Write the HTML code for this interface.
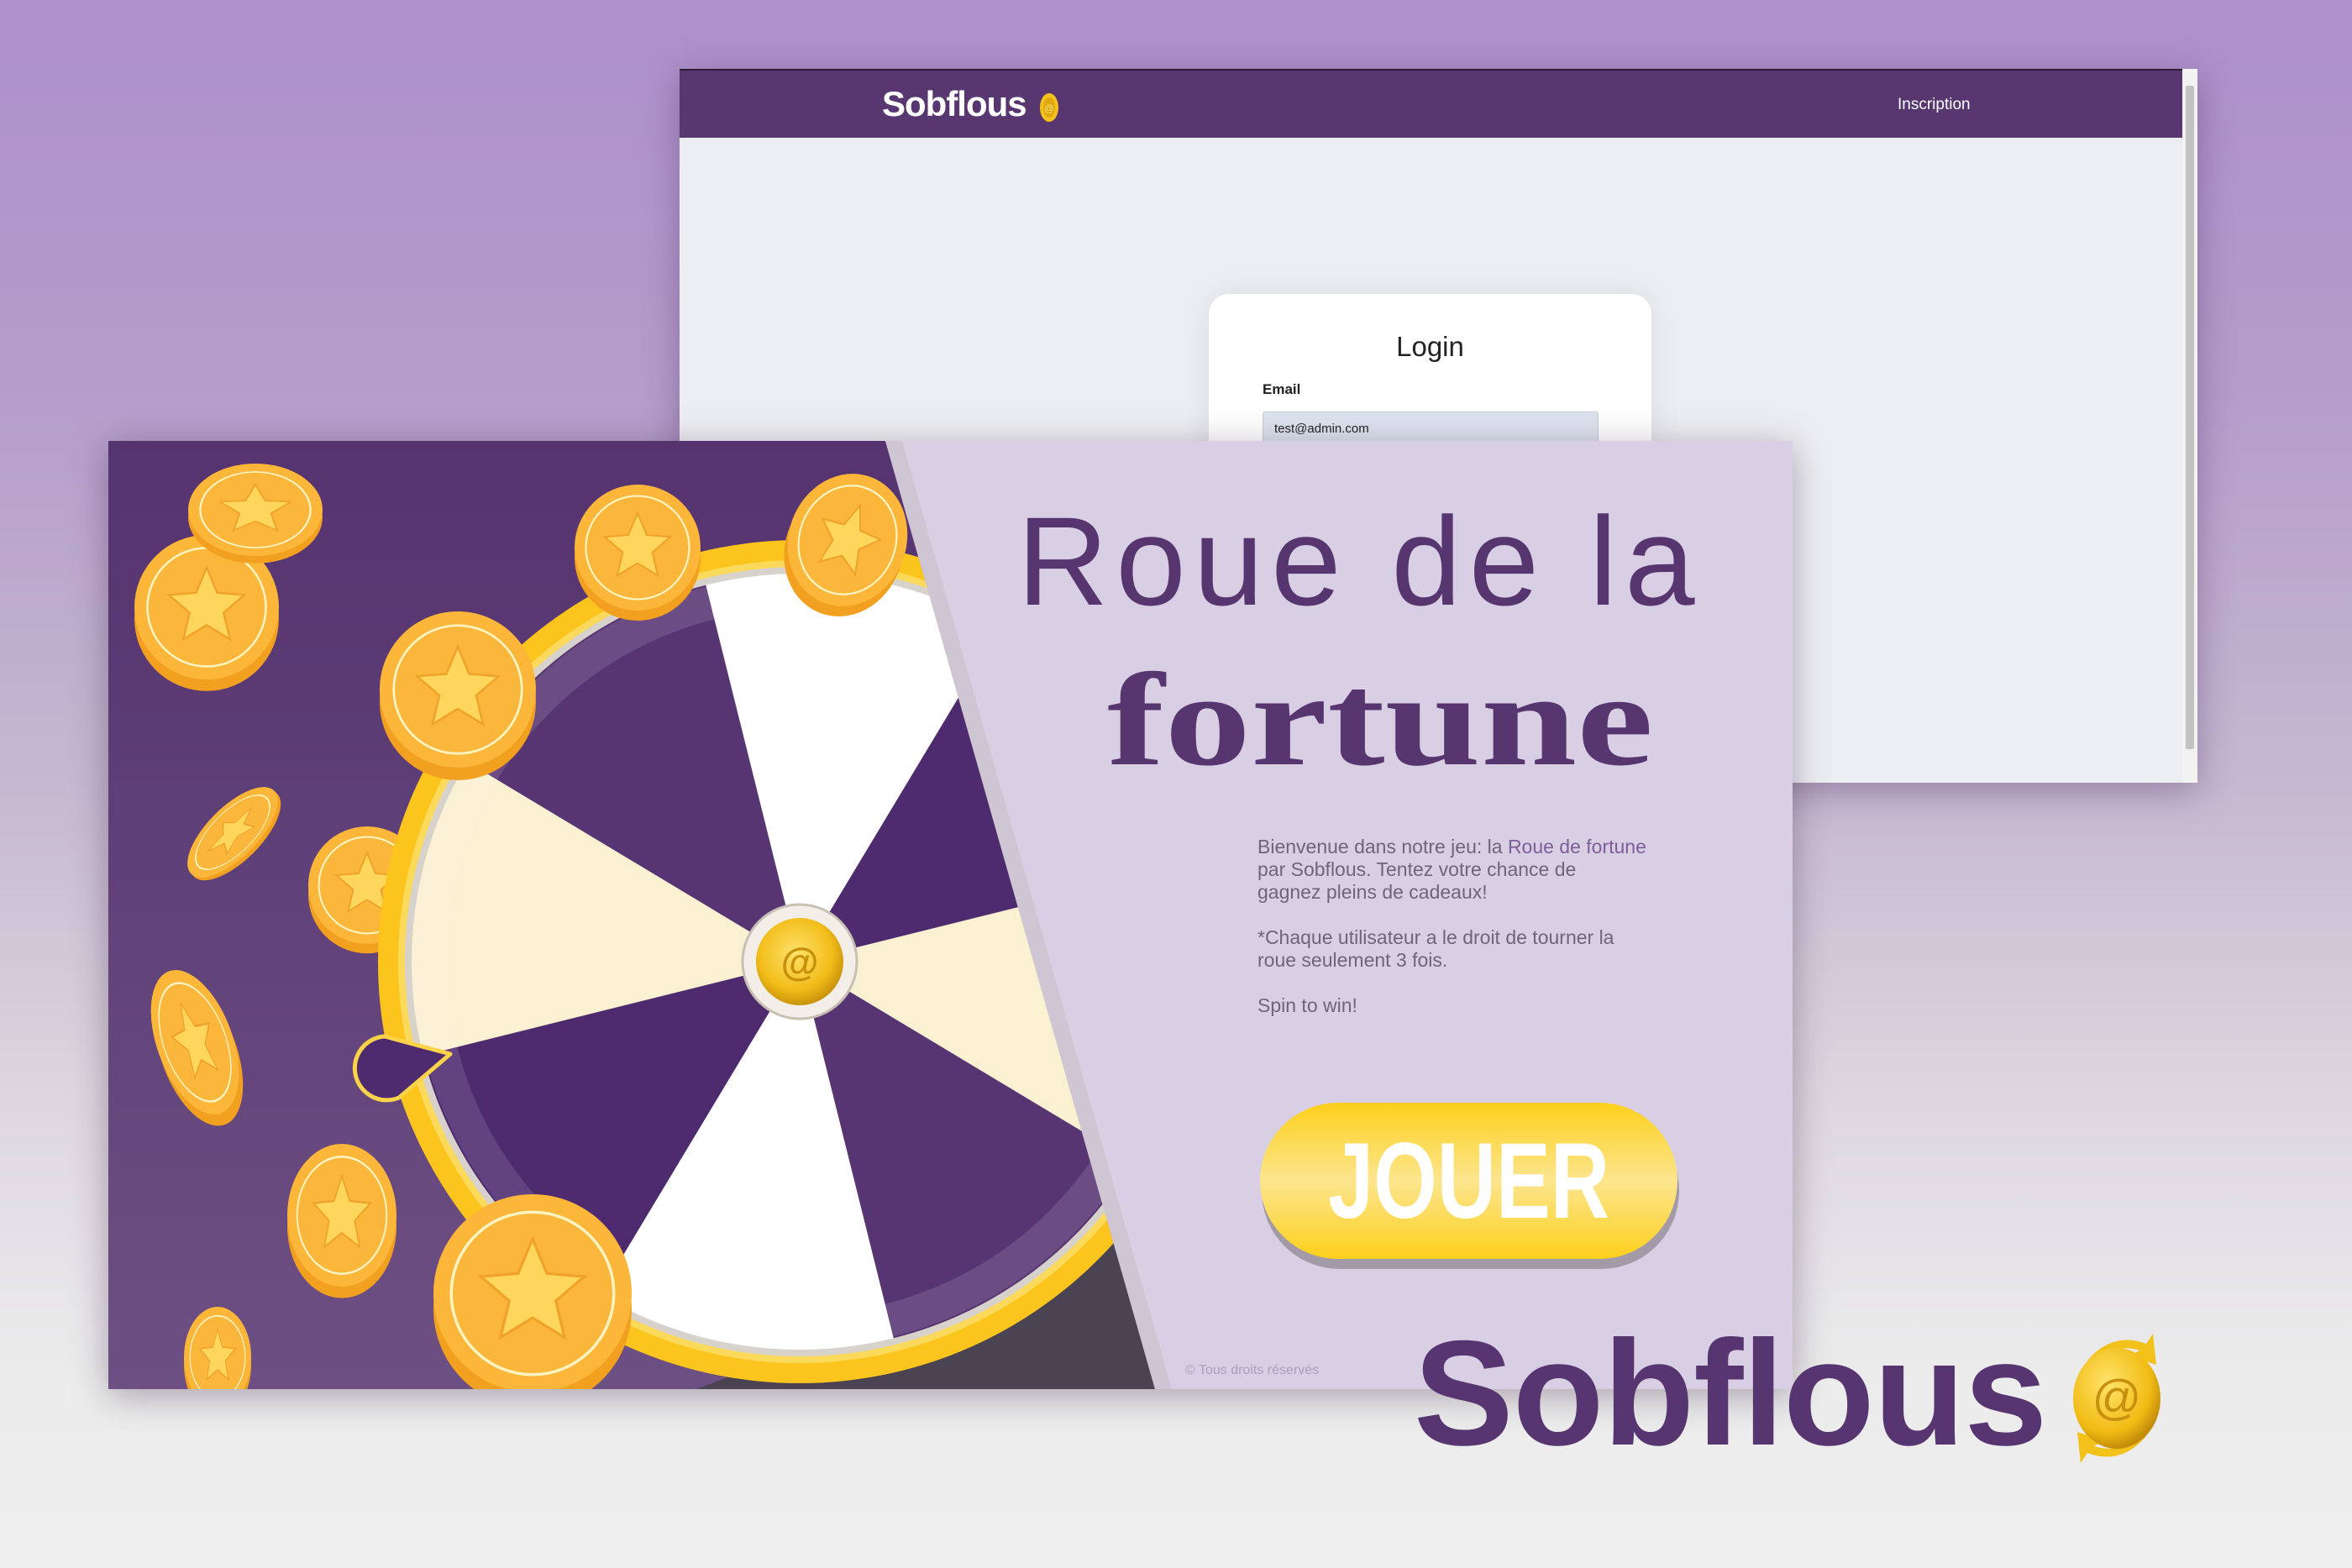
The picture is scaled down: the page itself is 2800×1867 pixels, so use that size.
<!DOCTYPE html>
<html><head><meta charset="utf-8"><style>
*{margin:0;padding:0;box-sizing:border-box}
body{width:2800px;height:1867px;overflow:hidden;position:relative;font-family:"Liberation Sans",sans-serif;
background:linear-gradient(180deg,#ad8fcb 0%,#b49dcb 25%,#c6b8d0 50%,#dcd7df 70%,#ececec 88%,#eeeeee 100%)}
.win{position:absolute;left:809px;top:82px;width:1807px;height:850px;background:#edeef2;box-shadow:0 10px 40px rgba(60,30,80,.35)}
.hdr{position:absolute;left:0;top:0;width:1789px;height:82px;background:#583770;border-top:2px solid #2a1f30}
.sb{position:absolute;right:0;top:0;width:18px;height:850px;background:#f2f2f2}
.sb i{position:absolute;left:4px;top:20px;width:10px;height:790px;background:#c3c3c3;border-radius:2px}
.login{position:absolute;left:630px;top:268px;width:527px;height:300px;background:#fff;border-radius:24px;box-shadow:0 0 40px rgba(0,0,0,.08)}
.front{position:absolute;left:129px;top:525px;width:2005px;height:1129px;box-shadow:0 8px 40px rgba(40,20,50,.35)}
.t{position:absolute;white-space:nowrap}
</style></head><body>
<div class="win">
 <div class="hdr">
  <div class="t" style="left:241px;top:16px;font-size:42px;font-weight:bold;color:#fff;letter-spacing:-1px">Sobflous</div>
  <svg class="t" style="left:425px;top:22px" width="30" height="44" viewBox="0 0 30 44"><ellipse cx="15" cy="22" rx="11" ry="17" fill="#f4c21a"/><ellipse cx="15" cy="22" rx="7" ry="12" fill="#e0a80f"/><text x="15" y="27" font-size="12" text-anchor="middle" fill="#fbe27a" font-family="Liberation Sans">@</text></svg>
  <div class="t" style="left:1450px;top:30px;font-size:19px;color:#fff">Inscription</div>
 </div>
 <div class="sb"><i></i></div>
 <div class="login">
  <div class="t" style="left:0;width:527px;text-align:center;top:44px;font-size:33px;color:#222">Login</div>
  <div class="t" style="left:64px;top:104px;font-size:17px;font-weight:bold;color:#222">Email</div>
  <div style="position:absolute;left:64px;top:140px;width:400px;height:60px;background:#dde3ee;border:1px solid #c8cdd8;border-radius:3px"></div>
  <div class="t" style="left:78px;top:152px;font-size:15px;color:#222">test@admin.com</div>
 </div>
</div>

<div class="front">
<svg width="2005" height="1129" viewBox="0 0 2005 1129" style="position:absolute;left:0;top:0">
<defs>
 <linearGradient id="lg" x1="0" y1="0" x2="0" y2="1"><stop offset="0" stop-color="#55336f"/><stop offset="1" stop-color="#6d5083"/></linearGradient>
 <clipPath id="left"><polygon points="0,0 925,0 1246,1129 0,1129"/></clipPath>
 <clipPath id="wc"><circle cx="823" cy="620" r="462"/></clipPath>
 <radialGradient id="gold" cx=".45" cy=".4" r=".6"><stop offset="0" stop-color="#ffe16a"/><stop offset=".7" stop-color="#f2bd1a"/><stop offset="1" stop-color="#c9930b"/></radialGradient>
 <g id="coin">
  <ellipse cx="0" cy="0.16" rx="1" ry="1" fill="#f1a020"/>
  <circle r="1" fill="#fcb63a"/>
  <circle r="0.82" fill="#fbb63c" stroke="#fff3c0" stroke-width="0.03"/>
  <polygon transform="scale(0.55)" points="0,-1 0.264,-0.364 0.951,-0.309 0.428,0.139 0.588,0.809 0,0.45 -0.588,0.809 -0.428,0.139 -0.951,-0.309 -0.264,-0.364" fill="#fed65c" stroke="#f0a22a" stroke-width="0.05"/>
 </g>
</defs>
<rect width="2005" height="1129" fill="#d9cfe4"/>
<g clip-path="url(#left)">
 <rect width="1300" height="1129" fill="url(#lg)"/>
 <polygon points="700,1129 1300,900 1300,1129" fill="#4a4452"/>
 <use href="#coin" transform="translate(308,529) scale(70)"/>
 <circle cx="823" cy="620" r="502" fill="#fcc51d"/>
 <circle cx="823" cy="620" r="478" fill="#fbd95a"/>
 <circle cx="823" cy="620" r="470" fill="#d8d2cc"/>
 <g clip-path="url(#wc)">
  <polygon points="823,620 678,38 1132,106" fill="#ffffff"/>
  <polygon points="823,620 1132,106 1405,475" fill="#4e2a6e"/>
  <polygon points="823,620 1405,475 1337,929" fill="#faf0d2"/>
  <polygon points="823,620 1337,929 968,1202" fill="#573572"/>
  <polygon points="823,620 968,1202 514,1134" fill="#ffffff"/>
  <polygon points="823,620 514,1134 241,765" fill="#4e2a6e"/>
  <polygon points="823,620 241,765 309,311" fill="#faf0d2"/>
  <polygon points="823,620 309,311 678,38" fill="#573572"/>
  <circle cx="823" cy="620" r="440" fill="none" stroke="rgba(255,255,255,.12)" stroke-width="40"/>
 </g>
 <circle cx="823" cy="620" r="68" fill="#f3efe8" stroke="#c9c0b4" stroke-width="3"/>
 <circle cx="823" cy="620" r="52" fill="url(#gold)"/>
 <text x="823" y="636" font-size="46" text-anchor="middle" fill="#c8900c" font-family="Liberation Sans" font-weight="bold">@</text>
 <path d="M407,730 L329,709 A38,38 0 1 0 346,782 Z" fill="#4e2a6e" stroke="#fbd34a" stroke-width="5" stroke-linejoin="round"/>
 <use href="#coin" transform="translate(117,198) scale(86)"/>
 <use href="#coin" transform="translate(175,82) scale(80,55)"/>
 <use href="#coin" transform="translate(630,127) scale(75)"/>
 <use href="#coin" transform="translate(880,118) rotate(20) scale(70,80)"/>
 <use href="#coin" transform="translate(416,296) scale(93)"/>
 <use href="#coin" transform="translate(148,466) rotate(-45) scale(70,30)"/>
 <use href="#coin" transform="translate(103,716) rotate(-20) scale(45,90)"/>
 <use href="#coin" transform="translate(278,922) scale(65,85)"/>
 <use href="#coin" transform="translate(505,1015) scale(118)"/>
 <use href="#coin" transform="translate(130,1091) scale(40,60)"/>
</g>
<polygon points="925,0 945,0 1266,1129 1246,1129" fill="#cfc6d4"/>
</svg>
<div class="t" style="left:1082px;top:68px;font-size:150px;letter-spacing:9px;color:#57356f;line-height:1">Roue de la</div>
<div class="t" style="left:1189px;top:254px;font-size:158px;font-family:'Liberation Serif',serif;font-weight:bold;color:#57356f;line-height:1;transform:scaleX(1.3);transform-origin:0 0">fortune</div>
<div class="t" style="left:1368px;top:470px;font-size:23px;line-height:27px;color:#6e6678">Bienvenue dans notre jeu: la <span style="color:#7d5d9a">Roue de fortune</span><br>par Sobflous. Tentez votre chance de<br>gagnez pleins de cadeaux!<br><br>*Chaque utilisateur a le droit de tourner la<br>roue seulement 3 fois.<br><br>Spin to win!</div>
<div style="position:absolute;left:1373px;top:800px;width:497px;height:186px;border-radius:93px;background:#a39aa8"></div>
<div style="position:absolute;left:1371px;top:788px;width:497px;height:186px;border-radius:93px;background:linear-gradient(180deg,#fdd01c 0%,#fce58e 50%,#fdd01c 100%)"></div>
<div class="t" style="left:1452px;top:818px;font-size:128px;font-weight:bold;color:#fff;transform:scaleX(.76);transform-origin:0 0;line-height:1">JOUER</div>
<div class="t" style="left:1282px;top:1098px;font-size:16px;color:#ab9fbb">© Tous droits réservés</div>
</div>

<div class="t" style="left:1683px;top:1570px;font-size:178px;font-weight:bold;color:#573570;line-height:1;letter-spacing:-1px">Sobflous</div>
<svg class="t" style="left:2455px;top:1580px" width="130" height="170" viewBox="0 0 130 170">
 <defs><radialGradient id="g2" cx=".4" cy=".35" r=".65"><stop offset="0" stop-color="#ffe46b"/><stop offset=".75" stop-color="#f1bb14"/><stop offset="1" stop-color="#c48d0a"/></radialGradient></defs>
 <path d="M30,40 Q60,5 100,20 L108,8 L112,45 L80,35 L92,28 Q60,18 38,45 Z" fill="#f3c21a"/>
 <path d="M100,130 Q70,165 30,150 L22,162 L18,125 L50,135 L38,142 Q70,152 92,125 Z" fill="#f3c21a"/>
 <ellipse cx="65" cy="85" rx="52" ry="60" fill="url(#g2)"/>
 <text x="65" y="104" font-size="58" text-anchor="middle" fill="#c89010" font-family="Liberation Sans">@</text>
</svg>
</body></html>
